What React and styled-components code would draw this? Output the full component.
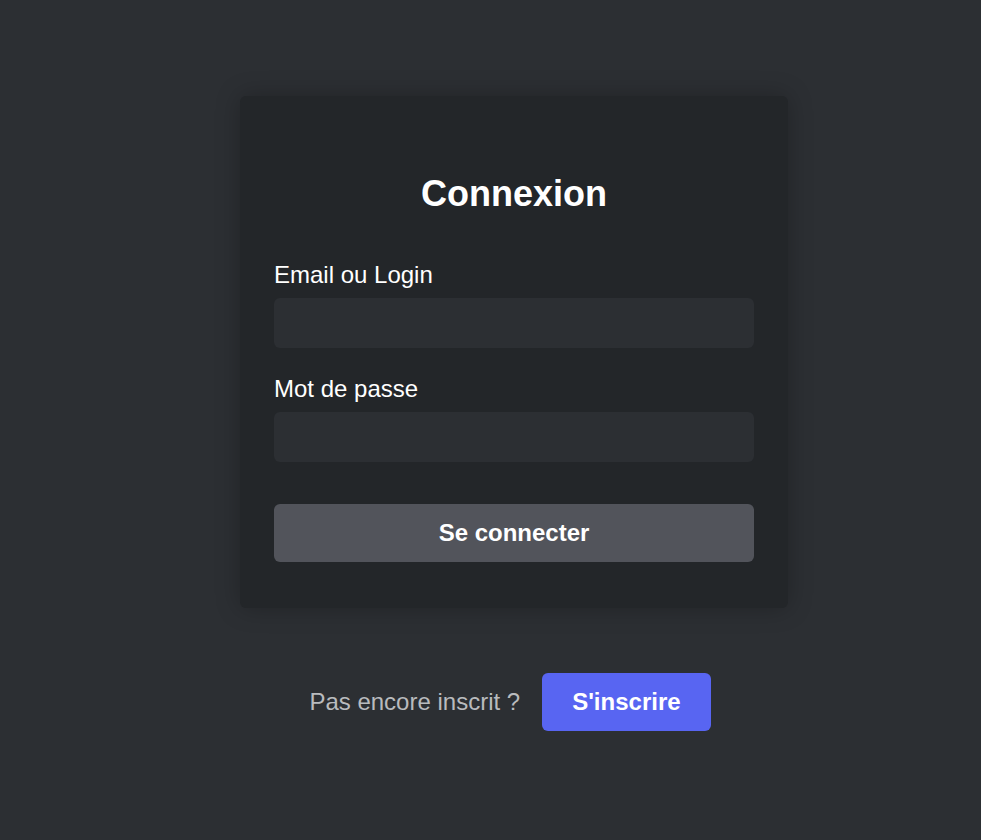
import React from 'react'
import styled, { createGlobalStyle } from 'styled-components'

const GlobalStyle = createGlobalStyle`
  html, body {
    margin: 0;
    padding: 0;
    background-color: #2c2f33;
    font-family: "Liberation Sans", Arial, sans-serif;
  }
`

const Page = styled.main`
  min-height: 840px;
  box-sizing: border-box;
  padding: 96px 0 0 47px;
  display: flex;
  flex-direction: column;
  align-items: center;
`

const Card = styled.form`
  width: 548px;
  box-sizing: border-box;
  padding: 77px 34px 46px;
  background-color: #232629;
  border-radius: 6px;
  box-shadow: 0 0 24px rgba(0, 0, 0, 0.25);
  display: flex;
  flex-direction: column;
`

const Title = styled.h1`
  margin: 0 0 46px;
  font-size: 36px;
  line-height: 42px;
  font-weight: 700;
  color: #ffffff;
  text-align: center;
`

const Field = styled.div`
  display: flex;
  flex-direction: column;
  gap: 9px;
  margin-bottom: ${props => props.last ? '42px' : '27px'};
`

const Label = styled.label`
  font-size: 24px;
  line-height: 28px;
  color: #ffffff;
`

const Input = styled.input`
  height: 50px;
  box-sizing: border-box;
  border: none;
  border-radius: 6px;
  background-color: #2c2f33;
  padding: 0 14px;
  font-family: inherit;
  font-size: 22px;
  color: #ffffff;
  outline: none;
`

const Button = styled.button`
  height: 58px;
  border: none;
  border-radius: 6px;
  background-color: ${props => props.primary ? '#5865f2' : '#52545b'};
  color: #ffffff;
  font-family: inherit;
  font-size: 24px;
  font-weight: 700;
  padding: 0 30px;
  cursor: pointer;
`

const SignupRow = styled.div`
  margin: 65px 8px 0 0;
  display: flex;
  align-items: center;
  gap: 22px;
`

const SignupText = styled.span`
  font-size: 24px;
  color: #b9bbbe;
`

const App = () => {
  return (
    <>
      <GlobalStyle />
      <Page>
        <Card onSubmit={e => e.preventDefault()}>
          <Title>Connexion</Title>
          <Field>
            <Label htmlFor="login">Email ou Login</Label>
            <Input id="login" type="text" />
          </Field>
          <Field last>
            <Label htmlFor="password">Mot de passe</Label>
            <Input id="password" type="password" />
          </Field>
          <Button type="submit">Se connecter</Button>
        </Card>
        <SignupRow>
          <SignupText>Pas encore inscrit ?</SignupText>
          <Button primary type="button">S'inscrire</Button>
        </SignupRow>
      </Page>
    </>
  )
}

export default App
